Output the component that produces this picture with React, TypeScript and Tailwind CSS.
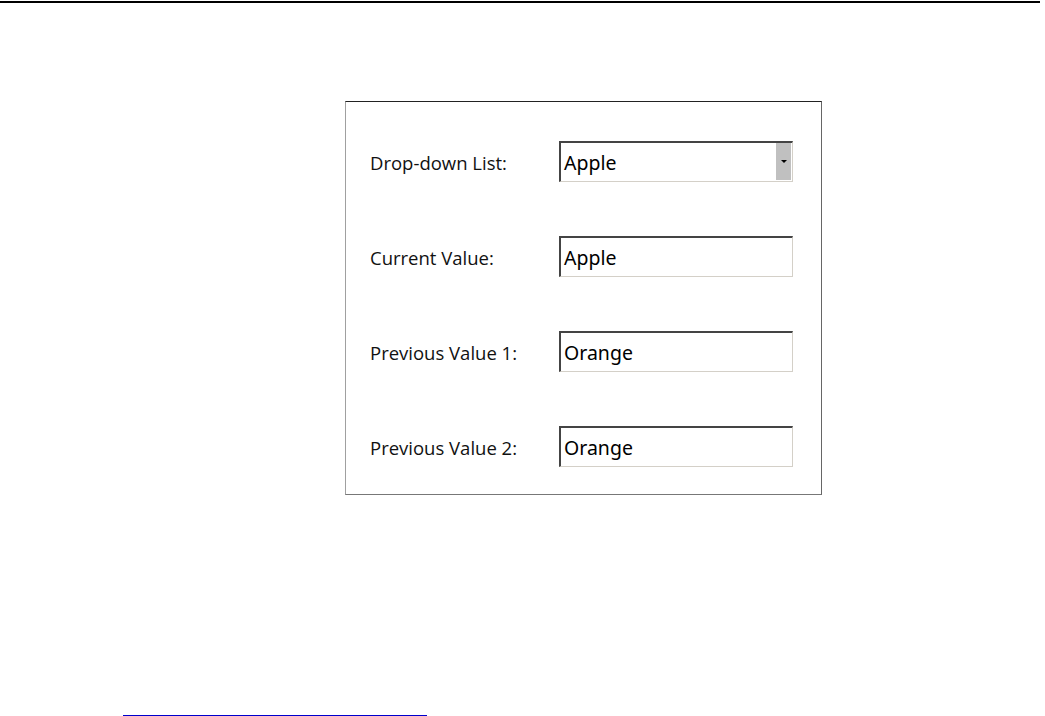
export default function App() {
  const rows = [
    { label: "Drop-down List:", value: "Apple", select: true },
    { label: "Current Value:", value: "Apple", select: false },
    { label: "Previous Value 1:", value: "Orange", select: false },
    { label: "Previous Value 2:", value: "Orange", select: false },
  ];

  return (
    <div className="flex h-[716px] w-[1045px] flex-col overflow-hidden bg-white">
      <div className="mt-px h-[2px] w-[1040px] bg-black" />

      {/* form panel */}
      <div className="ml-[345px] mt-[98px] flex h-[394px] w-[477px] flex-col gap-[54px] border border-t-[#222] border-l-[#a0a0a0] border-r-[#666] border-b-[#777] pl-6 pt-[39px]">
        {rows.map((row) => (
          <div key={row.label} className="flex items-center">
            <span
              className="mt-[2px] w-[189px] text-[18.5px] text-[#111]"
              style={{ fontFamily: "'Open Sans', 'Noto Sans', sans-serif" }}
            >
              {row.label}
            </span>
            <div className="relative flex h-[41px] w-[234px] items-center border-l-2 border-t-2 border-b border-r border-l-[#444] border-t-[#444] border-b-[#d4d0c8] border-r-[#d4d0c8] pl-[3px]">
              <span
                className="mt-px text-[19.5px] text-black"
                style={{ fontFamily: "'Noto Sans', 'DejaVu Sans', sans-serif" }}
              >
                {row.value}
              </span>
              {row.select && (
                <div className="absolute right-[1px] top-0 flex h-[37px] w-[15px] items-center justify-center bg-[#c0c0c0]">
                  <div className="h-0 w-0 border-l-[3px] border-r-[3px] border-t-[3px] border-l-transparent border-r-transparent border-t-black" />
                </div>
              )}
            </div>
          </div>
        ))}
      </div>

      <div className="mt-auto ml-[123px] h-px w-[304px] bg-[#0000cc]" />
    </div>
  );
}
